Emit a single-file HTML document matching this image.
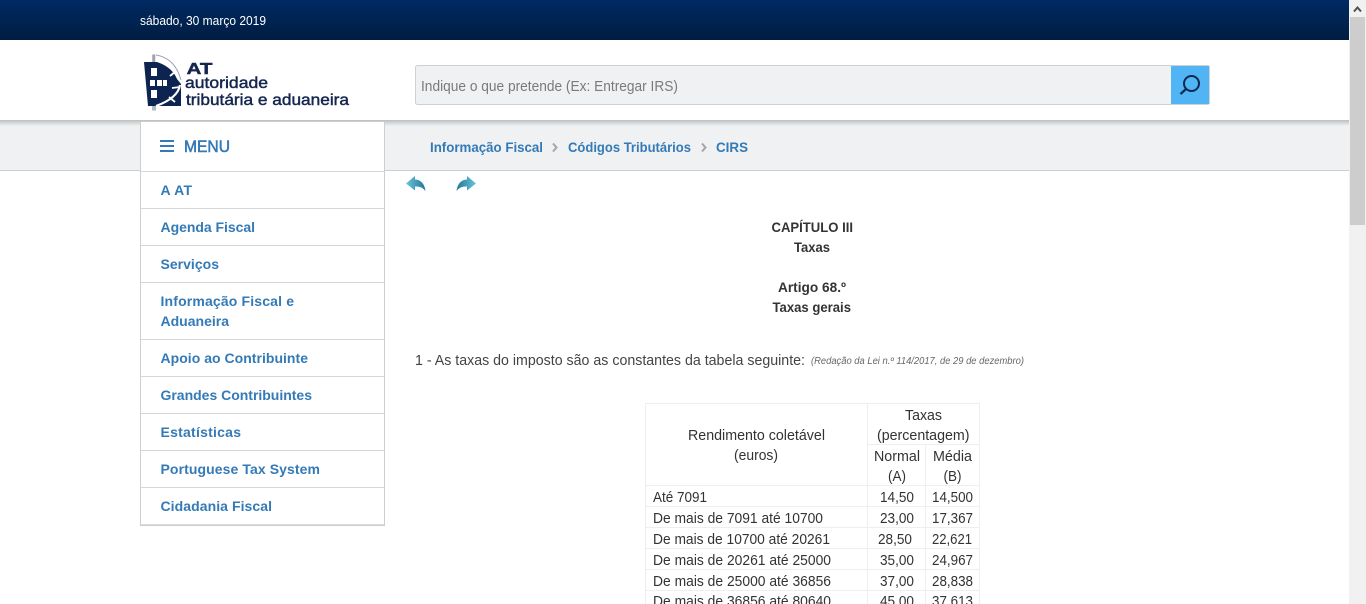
<!DOCTYPE html>
<html lang="pt">
<head>
<meta charset="utf-8">
<title>Autoridade Tributária e Aduaneira</title>
<style>
html,body{margin:0;padding:0;width:1366px;height:604px;overflow:hidden;background:#fff}
svg{display:block}
text{font-family:"Liberation Sans",sans-serif;white-space:pre}
.nav{font-size:14px;font-weight:bold;fill:#337ab7}
.c{font-size:14.500px;fill:#333}
.b{font-size:14px;font-weight:bold;fill:#333}
.lg{font-size:16px;fill:#14264f;stroke:#14264f;stroke-width:.45px}
</style>
</head>
<body>
<svg width="1366" height="604" viewBox="0 0 1366 604" xmlns="http://www.w3.org/2000/svg">
<defs>
<linearGradient id="top" x1="0" y1="0" x2="0" y2="1"><stop offset="0" stop-color="#002a63"/><stop offset="1" stop-color="#001d42"/></linearGradient>
<linearGradient id="shad" x1="0" y1="0" x2="0" y2="1"><stop offset="0" stop-color="#bdbec0"/><stop offset="1" stop-color="#f0f1f3"/></linearGradient>
<linearGradient id="arrL" x1="0" y1="0" x2="1" y2="0"><stop offset="0" stop-color="#6cc3da"/><stop offset="1" stop-color="#1f7896"/></linearGradient>
<linearGradient id="arrR" x1="0" y1="0" x2="1" y2="0"><stop offset="0" stop-color="#1f7896"/><stop offset="1" stop-color="#6cc3da"/></linearGradient>
</defs>

<!-- top bar -->
<rect x="0" y="0" width="1349" height="40" fill="url(#top)"/>
<text x="140" y="25" font-size="12.500" fill="#fff" textLength="126" lengthAdjust="spacingAndGlyphs">sábado, 30 março 2019</text>

<!-- logo -->
<path d="M153 54.500 L153 62 M154.500 54.500 L154.500 62 M153 106 L153 110.500 M155 106 L155 110.500" stroke="#9aa3b3" stroke-width="1.500" fill="none"/>
<path d="M156 55 Q175 58 181 80" stroke="#9aa3b3" stroke-width="1" fill="none"/>
<path d="M144 62 L157 62 Q172 67 177 79 L181 84 L181 106 L148 106 Z" fill="#0d2350"/>
<path d="M180 85 Q178 98 156 106" stroke="#fff" stroke-width="2.200" fill="none"/>
<path d="M170 76 L176 71 M172 88 L180 87 M169 97 L175 102" stroke="#fff" stroke-width="1.800" fill="none"/>
<g fill="#fff">
<rect x="151" y="68" width="6" height="8"/>
<rect x="150" y="80" width="5" height="6"/>
<rect x="157" y="80" width="5" height="6"/>
<rect x="163" y="80" width="4" height="6"/>
<rect x="151" y="90" width="6" height="8"/>
</g>
<text x="186.500" y="74" font-size="16" font-weight="bold" fill="#14264f" stroke="#14264f" stroke-width=".4" textLength="26" lengthAdjust="spacingAndGlyphs">AT</text>
<text class="lg" x="185" y="88" textLength="83" lengthAdjust="spacingAndGlyphs">autoridade</text>
<text class="lg" x="186" y="105" textLength="163" lengthAdjust="spacingAndGlyphs">tributária e aduaneira</text>

<!-- search -->
<rect x="415.500" y="65.500" width="794" height="39" rx="2" fill="#f0f1f3" stroke="#cfd0d2"/>
<text x="421" y="91" font-size="14.500" fill="#7a7a7a" textLength="257" lengthAdjust="spacingAndGlyphs">Indique o que pretende (Ex: Entregar IRS)</text>
<rect x="1171" y="66" width="38" height="38" fill="#50b4f5"/>
<circle cx="1191.500" cy="83.500" r="7.500" fill="none" stroke="#0f2a50" stroke-width="2"/>
<path d="M1186 89 L1180.500 94" stroke="#0f2a50" stroke-width="2.200" fill="none"/>

<!-- nav band -->
<rect x="0" y="121" width="1349" height="50" fill="#f0f1f3"/>
<rect x="0" y="120" width="1349" height="6" fill="url(#shad)"/>
<rect x="0" y="170" width="1349" height="1" fill="#cdced0"/>

<!-- breadcrumb -->
<text class="nav" x="430" y="152" textLength="113" lengthAdjust="spacingAndGlyphs">Informação Fiscal</text>
<path d="M553 143.500 L556.500 147.500 L553 151.500" fill="none" stroke="#a5a5a5" stroke-width="2"/>
<text class="nav" x="568" y="152" textLength="123" lengthAdjust="spacingAndGlyphs">Códigos Tributários</text>
<path d="M702 143.500 L705.500 147.500 L702 151.500" fill="none" stroke="#a5a5a5" stroke-width="2"/>
<text class="nav" x="716" y="152" textLength="32" lengthAdjust="spacingAndGlyphs">CIRS</text>

<!-- menu -->
<rect x="140.500" y="121.500" width="244" height="404" fill="#fff" stroke="#cdced0"/>
<rect x="141" y="524" width="243" height="1" fill="#dcdcdc"/>
<g fill="#337ab7">
<rect x="160" y="140" width="14" height="2"/>
<rect x="160" y="145" width="14" height="2"/>
<rect x="160" y="150" width="14" height="2"/>
</g>
<text x="184" y="152" font-size="16.500" fill="#337ab7" stroke="#337ab7" stroke-width=".55" textLength="46" lengthAdjust="spacingAndGlyphs">MENU</text>
<g fill="#d5d6d8">
<rect x="141" y="171" width="243" height="1"/>
<rect x="141" y="208" width="243" height="1"/>
<rect x="141" y="245" width="243" height="1"/>
<rect x="141" y="282" width="243" height="1"/>
<rect x="141" y="339" width="243" height="1"/>
<rect x="141" y="376" width="243" height="1"/>
<rect x="141" y="413" width="243" height="1"/>
<rect x="141" y="450" width="243" height="1"/>
<rect x="141" y="487" width="243" height="1"/>
</g>
<text class="nav" x="160.500" y="195" textLength="31.500" lengthAdjust="spacing">A AT</text>
<text class="nav" x="160.500" y="232" textLength="94.500" lengthAdjust="spacing">Agenda Fiscal</text>
<text class="nav" x="160.500" y="269" textLength="58.500" lengthAdjust="spacing">Serviços</text>
<text class="nav" x="160.500" y="306" textLength="133.500" lengthAdjust="spacing">Informação Fiscal e</text>
<text class="nav" x="160.500" y="326" textLength="68.500" lengthAdjust="spacing">Aduaneira</text>
<text class="nav" x="160.500" y="363" textLength="147.500" lengthAdjust="spacing">Apoio ao Contribuinte</text>
<text class="nav" x="160.500" y="400" textLength="151.500" lengthAdjust="spacing">Grandes Contribuintes</text>
<text class="nav" x="160.500" y="437" textLength="80.500" lengthAdjust="spacing">Estatísticas</text>
<text class="nav" x="160.500" y="474" textLength="159.500" lengthAdjust="spacing">Portuguese Tax System</text>
<text class="nav" x="160.500" y="511" textLength="111.500" lengthAdjust="spacing">Cidadania Fiscal</text>

<!-- back / forward -->
<path d="M406 183.500 L415 176 L415 179.500 Q424 180 425.500 191 Q422 186 415 186.500 L415 190.500 Z" fill="url(#arrL)"/>
<path d="M476 183.500 L467 176 L467 179.500 Q458 180 456.500 191 Q460 186 467 186.500 L467 190.500 Z" fill="url(#arrR)"/>

<!-- heading -->
<text class="b" x="771.500" y="232" textLength="81.500" lengthAdjust="spacingAndGlyphs">CAPÍTULO III</text>
<text class="b" x="794" y="252" textLength="36" lengthAdjust="spacingAndGlyphs">Taxas</text>
<text class="b" x="778" y="292" textLength="68" lengthAdjust="spacingAndGlyphs">Artigo 68.º</text>
<text class="b" x="772.500" y="312" textLength="78.500" lengthAdjust="spacingAndGlyphs">Taxas gerais</text>

<text x="415" y="365" font-size="14.500" fill="#444" textLength="390" lengthAdjust="spacingAndGlyphs">1 - As taxas do imposto são as constantes da tabela seguinte:</text>
<text x="811" y="364" font-size="10" font-style="italic" fill="#666" textLength="213" lengthAdjust="spacingAndGlyphs">(Redação da Lei n.º 114/2017, de 29 de dezembro)</text>

<!-- table -->
<g fill="#eeeeee">
<rect x="645" y="403" width="335" height="1"/>
<rect x="868" y="444" width="112" height="1"/>
<rect x="645" y="485" width="335" height="1"/>
<rect x="645" y="506" width="335" height="1"/>
<rect x="645" y="527" width="335" height="1"/>
<rect x="645" y="548" width="335" height="1"/>
<rect x="645" y="569" width="335" height="1"/>
<rect x="645" y="590" width="335" height="1"/>
<rect x="645" y="403" width="1" height="201"/>
<rect x="867" y="403" width="1" height="201"/>
<rect x="925" y="444" width="1" height="160"/>
<rect x="979" y="403" width="1" height="201"/>
</g>
<text class="c" x="688" y="440" textLength="137" lengthAdjust="spacingAndGlyphs">Rendimento coletável</text>
<text class="c" x="734" y="460" textLength="44" lengthAdjust="spacingAndGlyphs">(euros)</text>
<text class="c" x="905" y="420" textLength="37" lengthAdjust="spacingAndGlyphs">Taxas</text>
<text class="c" x="877" y="440" textLength="92.500" lengthAdjust="spacingAndGlyphs">(percentagem)</text>
<text class="c" x="874" y="461" textLength="46" lengthAdjust="spacingAndGlyphs">Normal</text>
<text class="c" x="888" y="481" textLength="18" lengthAdjust="spacingAndGlyphs">(A)</text>
<text class="c" x="933" y="461" textLength="39" lengthAdjust="spacingAndGlyphs">Média</text>
<text class="c" x="943.500" y="481" textLength="18" lengthAdjust="spacingAndGlyphs">(B)</text>

<text class="c" x="653" y="502" textLength="54" lengthAdjust="spacingAndGlyphs">Até 7091</text>
<text class="c" x="880" y="502" textLength="34" lengthAdjust="spacingAndGlyphs">14,50</text>
<text class="c" x="932" y="502" textLength="41" lengthAdjust="spacingAndGlyphs">14,500</text>

<text class="c" x="653" y="523" textLength="170" lengthAdjust="spacingAndGlyphs">De mais de 7091 até 10700</text>
<text class="c" x="880" y="523" textLength="34" lengthAdjust="spacingAndGlyphs">23,00</text>
<text class="c" x="932" y="523" textLength="41" lengthAdjust="spacingAndGlyphs">17,367</text>

<text class="c" x="653" y="544" textLength="177" lengthAdjust="spacingAndGlyphs">De mais de 10700 até 20261</text>
<text class="c" x="878" y="544" textLength="34" lengthAdjust="spacingAndGlyphs">28,50</text>
<text class="c" x="932" y="544" textLength="40" lengthAdjust="spacingAndGlyphs">22,621</text>

<text class="c" x="653" y="565" textLength="178" lengthAdjust="spacingAndGlyphs">De mais de 20261 até 25000</text>
<text class="c" x="880" y="565" textLength="34" lengthAdjust="spacingAndGlyphs">35,00</text>
<text class="c" x="932" y="565" textLength="41" lengthAdjust="spacingAndGlyphs">24,967</text>

<text class="c" x="653" y="586" textLength="178" lengthAdjust="spacingAndGlyphs">De mais de 25000 até 36856</text>
<text class="c" x="880" y="586" textLength="34" lengthAdjust="spacingAndGlyphs">37,00</text>
<text class="c" x="932" y="586" textLength="41" lengthAdjust="spacingAndGlyphs">28,838</text>

<text class="c" x="653" y="606" textLength="178" lengthAdjust="spacingAndGlyphs">De mais de 36856 até 80640</text>
<text class="c" x="880" y="606" textLength="34" lengthAdjust="spacingAndGlyphs">45,00</text>
<text class="c" x="932" y="606" textLength="41" lengthAdjust="spacingAndGlyphs">37,613</text>

<!-- scrollbar -->
<rect x="1349" y="0" width="17" height="604" fill="#f1f1f1"/>
<rect x="1350" y="17" width="15" height="208" fill="#cdcdcd"/>
<path d="M1354 11.500 L1357.500 7.500 L1361 11.500" fill="none" stroke="#505050" stroke-width="2"/>
</svg>
</body>
</html>
